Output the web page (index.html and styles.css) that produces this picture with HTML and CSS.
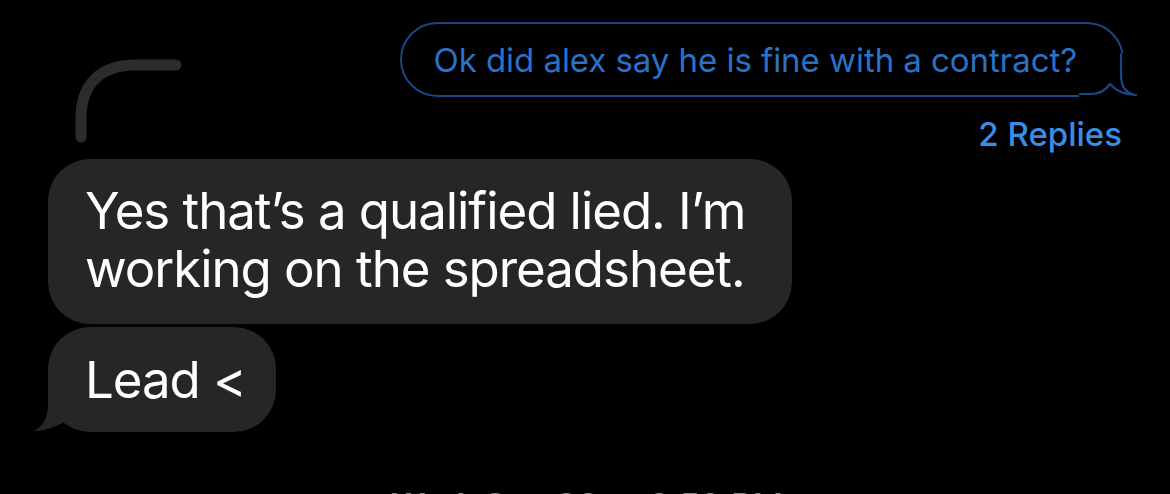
FILE: index.html
```html
<!DOCTYPE html>
<html lang="en">
<head>
<meta charset="utf-8">
<title>Messages thread</title>
<link rel="stylesheet" href="styles.css">
</head>
<body>
<main class="thread">
  <div class="row-right">
    <div class="bubble-outline">
      <span class="outline-text">Ok did alex say he is fine with a contract?</span>
      <svg class="outline-tail" width="60" height="44" viewBox="0 0 60 44" aria-hidden="true">
        <rect x="0" y="0" width="60" height="44" fill="#000"/>
        <path d="M-1 41 L12 41 Q24 41 31 31 Q39 41 57 42 Q42 40 42 22 L42 -1" fill="none" stroke="#1b4583" stroke-width="2.2" stroke-linejoin="round"/>
      </svg>
    </div>
  </div>
  <div class="row-right">
    <span class="replies">2 Replies</span>
  </div>
  <div class="reply-group">
    <svg class="reply-arc" width="124" height="92" viewBox="0 0 124 92" aria-hidden="true">
      <path d="M21 82 L21 63 C21 30 40 10 75 10 L116 10" fill="none" stroke="#2c2c2e" stroke-width="11" stroke-linecap="round"/>
    </svg>
    <div class="bubble bubble-first">Yes that’s a qualified lied. I’m<br>working on the spreadsheet.</div>
    <div class="bubble bubble-last">Lead &lt;
      <svg class="gray-tail" width="34" height="40" viewBox="0 0 34 40" aria-hidden="true">
        <path d="M0 39 C8 36 15 28 15 12 L15 0 L34 0 L34 28 C26 34 12 39 0 39 Z" fill="#262628"/>
      </svg>
    </div>
  </div>
  <div class="timestamp"><b>Wed, Sep 20</b> at 2:59 PM</div>
</main>
</body>
</html>
```
FILE: styles.css
```css
* { box-sizing: border-box; }
html, body {
  margin: 0;
  background: #000;
  height: 494px;
  overflow: hidden;
}
.thread {
  display: flex;
  flex-direction: column;
  padding: 22px 44px 0 48px;
  font-family: Inter, "Noto Sans", sans-serif;
}
.row-right {
  display: flex;
  justify-content: flex-end;
}
.bubble-outline {
  position: relative;
  height: 75px;
  border: 2px solid #1b4583;
  border-radius: 38px;
  padding: 0 45px 0 31px;
  display: flex;
  align-items: center;
  margin-right: 2px;
}
.outline-text {
  color: #2a72c8;
  font-size: 33px;
  letter-spacing: -0.05px;
}
.outline-tail {
  position: absolute;
  right: -17px;
  bottom: -2px;
}
.replies {
  color: #3a8de6;
  font-size: 33px;
  font-weight: 500;
  line-height: 36px;
  margin-top: 19px;
  margin-right: 4px;
}
.reply-group {
  position: relative;
  display: flex;
  flex-direction: column;
  align-items: flex-start;
  gap: 3px;
  margin-top: 7px;
}
.reply-arc {
  position: absolute;
  left: 12px;
  top: -104px;
}
.bubble {
  position: relative;
  background: #262628;
  color: #fff;
  font-size: 51px;
  line-height: 58px;
  border-radius: 42px;
  letter-spacing: -1.05px;
}
.bubble-first {
  padding: 23px 47px 26px 37px;
}
.bubble-last {
  padding: 24px 30px 23px 37px;
}
.gray-tail {
  position: absolute;
  left: -15px;
  bottom: 0;
}
.timestamp {
  margin-top: 53px;
  text-align: center;
  color: #8e8e93;
  font-size: 34px;
  line-height: 41px;
}
.timestamp b { font-weight: 600; }
```
